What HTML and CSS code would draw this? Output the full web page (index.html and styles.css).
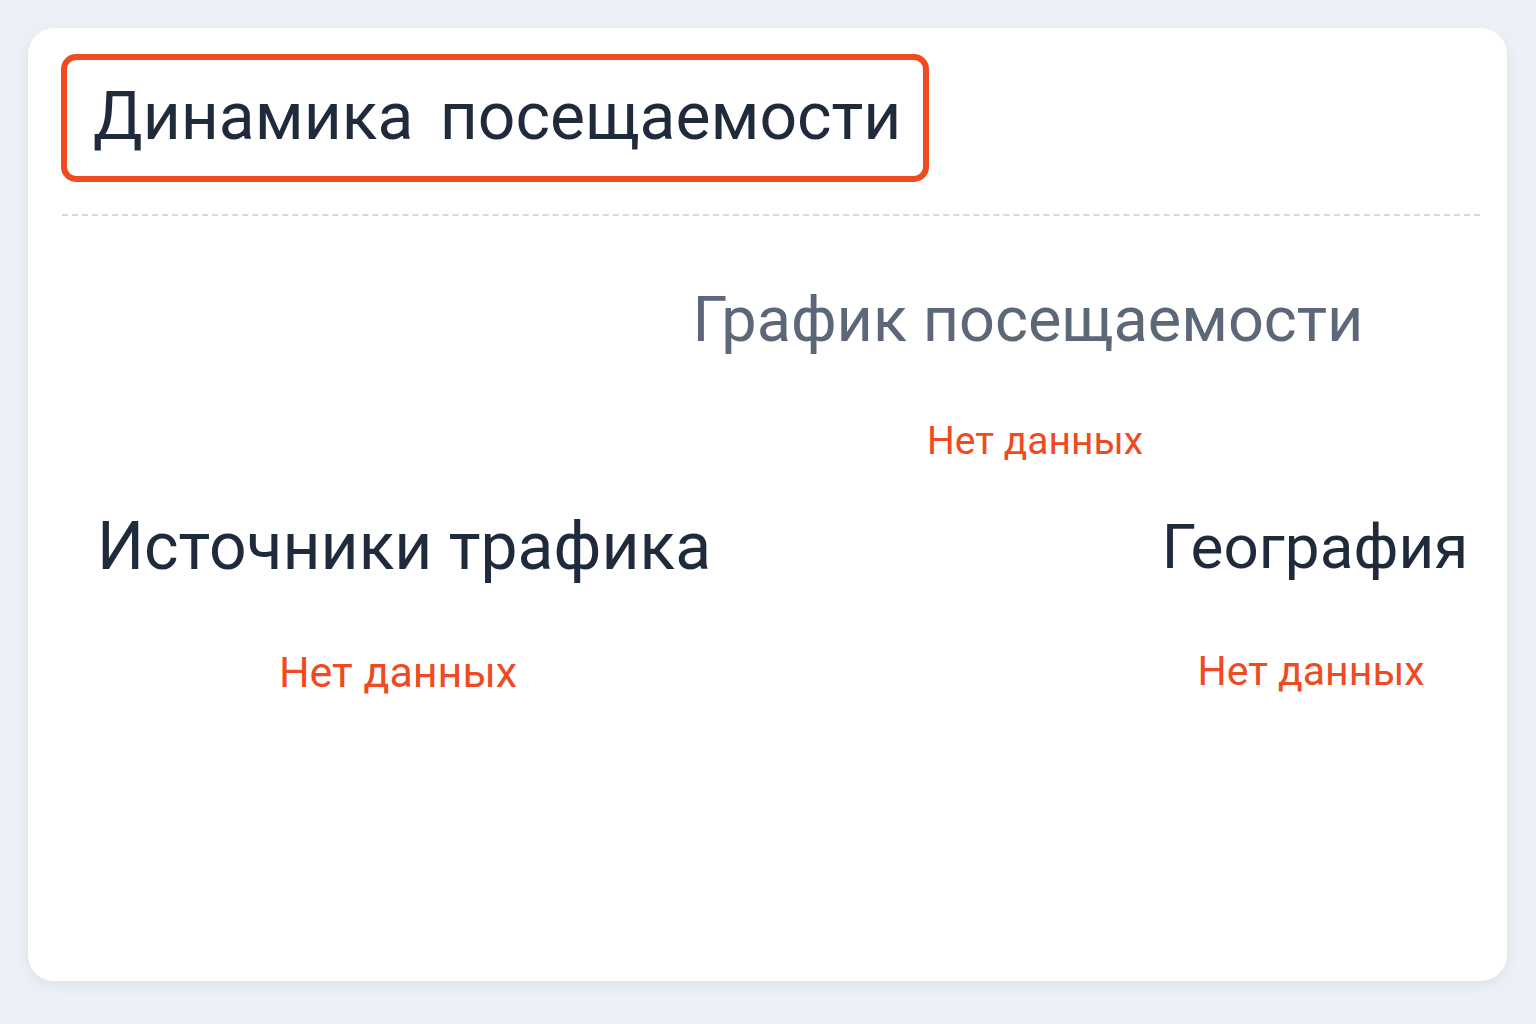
FILE: index.html
```html
<!DOCTYPE html>
<html lang="ru">
<head>
    <meta charset="UTF-8">
    <meta name="viewport" content="width=device-width, initial-scale=1.0">
    <title>Динамика посещаемости</title>
    <link rel="stylesheet" href="styles.css">
</head>
<body>

<div class="card">
    <div class="card-header">
        <h1 class="card-title">Динамика посещаемости</h1>
    </div>
    <div class="divider"></div>

    <div class="chart-block">
        <h2 class="chart-title">График посещаемости</h2>
        <div class="empty">Нет данных</div>
    </div>

    <div class="bottom-row">
        <div class="panel panel-sources">
            <h2 class="panel-title">Источники трафика</h2>
            <div class="empty empty-lg">Нет данных</div>
        </div>
        <div class="panel panel-geo">
            <h2 class="panel-title">География</h2>
            <div class="empty empty-lg">Нет данных</div>
        </div>
    </div>
</div>

</body>
</html>
```

FILE: styles.css
```css
body {
    font-family: 'Roboto', 'Inter', sans-serif;
    background-color: #edf1f7;
    margin: 0;
    padding: 28px 29px 43px 28px;
}
.card {
    background-color: #ffffff;
    border-radius: 26px;
    height: 953px;
    box-sizing: border-box;
    padding: 26px 27px 0 33px;
    box-shadow: 0 4px 14px rgba(30, 50, 90, 0.08);
}
.card-header {
    display: flex;
}
.card-title {
    margin: 0;
    width: 868px;
    height: 128px;
    box-sizing: border-box;
    display: flex;
    align-items: center;
    white-space: nowrap;
    padding: 0 0 4px 26px;
    border: 6px solid #f04a20;
    border-radius: 15px;
    font-size: 66px;
    font-weight: 400;
    color: #1f2b3b;
    word-spacing: 10px;
}
.divider {
    margin: 32px 0 0 1px;
    border-top: 2px dashed #d6dadf;
}
.chart-block {
    margin-left: 517px;
    width: 900px;
    text-align: center;
    padding-top: 64px;
}
.chart-title {
    margin: 0;
    font-size: 63px;
    font-weight: 400;
    color: #5c6878;
    line-height: 80px;
}
.empty {
    color: #ef4a22;
    font-size: 39px;
    margin-top: 58px;
    padding-left: 14px;
}
.bottom-row {
    display: flex;
    justify-content: space-between;
    margin-top: 43px;
}
.panel {
    text-align: center;
}
.panel-sources {
    width: 686px;
}
.panel-geo {
    width: 350px;
    margin-right: -10px;
}
.panel-title {
    margin: 0;
    font-size: 66px;
    font-weight: 400;
    color: #1f2b3b;
    line-height: 80px;
}
.panel-geo .panel-title {
    font-size: 62px;
}
.empty-lg {
    font-size: 43px;
    margin-top: 60px;
    padding-left: 0;
}
.panel-sources .empty-lg {
    padding-right: 12px;
}
.panel-geo .empty-lg {
    font-size: 41px;
    padding-right: 8px;
}
```
